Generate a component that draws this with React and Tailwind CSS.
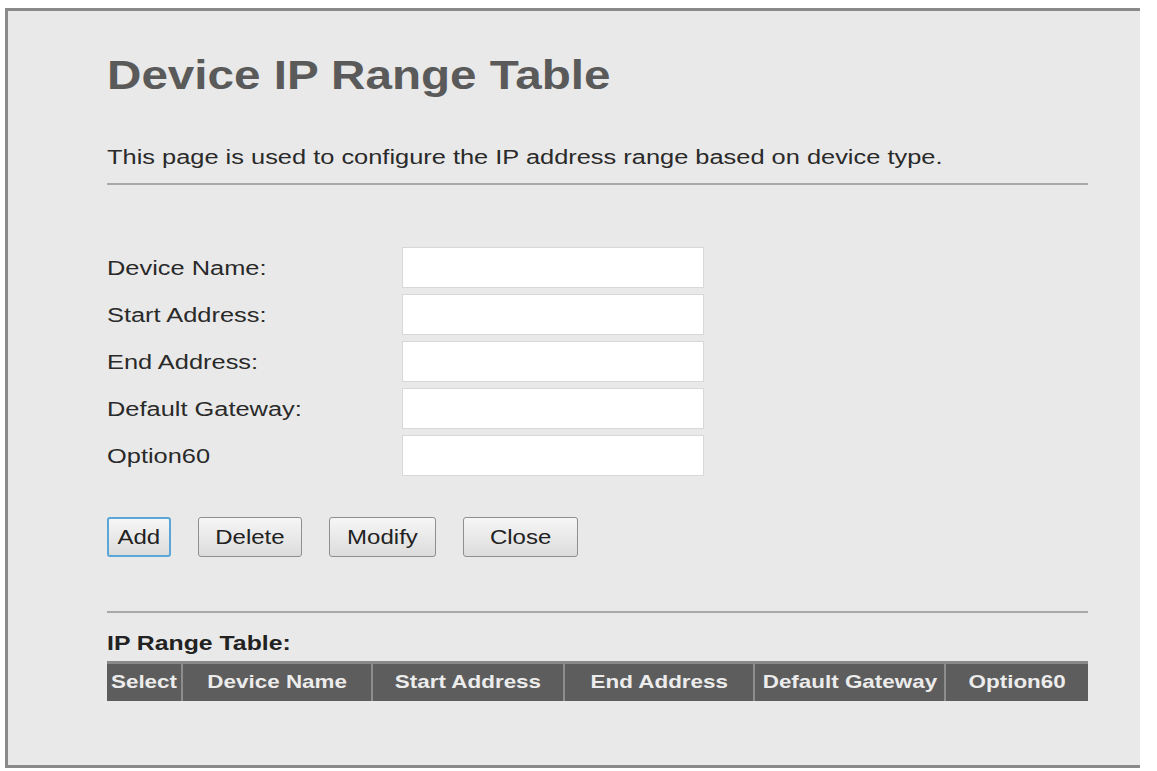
export default function App() {
  const rows = ["Device Name:", "Start Address:", "End Address:", "Default Gateway:", "Option60"];
  const cols = [
    ["Select", "w-[76px]"],
    ["Device Name", "w-[190px]"],
    ["Start Address", "w-[192px]"],
    ["End Address", "w-[190px]"],
    ["Default Gateway", "w-[191px]"],
    ["Option60", "flex-1"],
  ];
  const btns = [
    ["Add", "w-[64px]", true],
    ["Delete", "w-[104px]", false],
    ["Modify", "w-[107px]", false],
    ["Close", "w-[115px]", false],
  ];
  return (
    <div className="w-[1157px] h-[771px] bg-white pt-[8px] pl-[5px]" style={{ fontFamily: '"Liberation Sans", Arial, sans-serif' }}>
      <div className="w-[1135px] h-[760px] bg-[#e9e9e9] border-l-[3px] border-t-[3px] border-b-[3px] border-[#8a8a8a] pl-[99px] pt-[38px]">
        <div className="w-[981px]">
          <h1 className="text-[40px] font-bold text-[#5a5a5a] leading-[52px] origin-left scale-x-[1.19]">Device IP Range Table</h1>
          <p className="mt-[44px] text-[20px] text-[#2a2a2a] leading-[24px] origin-left scale-x-[1.27] whitespace-nowrap">This page is used to configure the IP address range based on device type.</p>
          <div className="mt-[14px] h-[2px] bg-[#a8a8a8]" />
          <div className="mt-[62px] flex flex-col gap-[6px]">
            {rows.map((r) => (
              <div key={r} className="flex items-center h-[41px]">
                <span className="w-[295px] text-[20px] text-[#2a2a2a] origin-left scale-x-[1.27] whitespace-nowrap">{r}</span>
                <div className="w-[302px] h-[41px] bg-white border border-[#d8d8d8]" />
              </div>
            ))}
          </div>
          <div className="mt-[41px] flex gap-[27px]">
            {btns.map(([b, w, f]) => (
              <div key={b} className={`${w} h-[40px] flex items-center justify-center text-[20px] text-[#222] rounded-[3px] bg-gradient-to-b from-[#f6f6f6] to-[#dcdcdc] ${f ? "border-2 border-[#5aa6d6]" : "border border-[#8f8f8f]"}`}>
                <span className="scale-x-[1.2]">{b}</span>
              </div>
            ))}
          </div>
          <div className="mt-[54px] h-[2px] bg-[#a8a8a8]" />
          <div className="mt-[18px] text-[20px] font-bold text-[#222] leading-[24px] origin-left scale-x-[1.24] whitespace-nowrap">IP Range Table:</div>
          <div className="mt-[6px] flex h-[40px] bg-[#5d5d5d] border-t-[3px] border-[#8a8a8a]">
            {cols.map(([c, w], i) => (
              <div key={c} className={`${w} flex items-center justify-center text-[19px] font-bold text-[#ececec] whitespace-nowrap ${i < 5 ? "border-r-2 border-[#8d8d8d]" : ""}`}>
                <span className="scale-x-[1.18]">{c}</span>
              </div>
            ))}
          </div>
        </div>
      </div>
    </div>
  );
}
